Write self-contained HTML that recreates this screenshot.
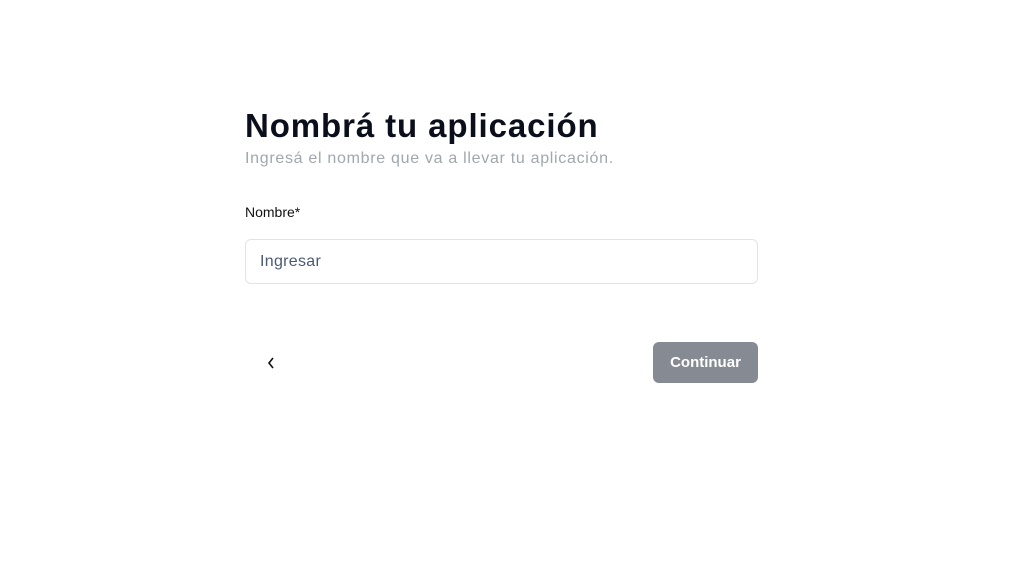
<!DOCTYPE html>
<html><head><meta charset="utf-8"><style>
html,body{margin:0;padding:0;background:#fff;width:1028px;height:575px;overflow:hidden;font-family:"Liberation Sans",sans-serif;}
.t{position:absolute;left:245px;top:107px;font-size:33px;font-weight:bold;color:#0b0f1c;letter-spacing:0.9px;white-space:nowrap;}
.s{position:absolute;left:245px;top:150px;font-size:16px;color:#a3a6ae;letter-spacing:0.7px;white-space:nowrap;}
.l{position:absolute;left:245px;top:204px;font-size:14px;color:#111;}
.i{position:absolute;left:245px;top:239px;width:511px;height:43px;border:1px solid #e1e3e8;border-radius:6px;box-sizing:content-box;}
.i span{position:absolute;left:14px;top:13px;font-size:16px;color:#4a5a72;letter-spacing:0.3px;}
.b{position:absolute;left:653px;top:342px;width:105px;height:41px;background:#868a93;border-radius:6px;color:#fff;font-size:15px;font-weight:bold;text-align:center;line-height:42px;}
svg{position:absolute;left:266px;top:356px;}
</style></head><body>
<div class="t">Nombrá tu aplicación</div>
<div class="s">Ingresá el nombre que va a llevar tu aplicación.</div>
<div class="l">Nombre*</div>
<div class="i"><span>Ingresar</span></div>
<svg width="10" height="14" viewBox="0 0 10 14"><path d="M7 2 L3 7 L7 12" stroke="#111" stroke-width="1.6" fill="none"/></svg>
<div class="b">Continuar</div>
</body></html>
